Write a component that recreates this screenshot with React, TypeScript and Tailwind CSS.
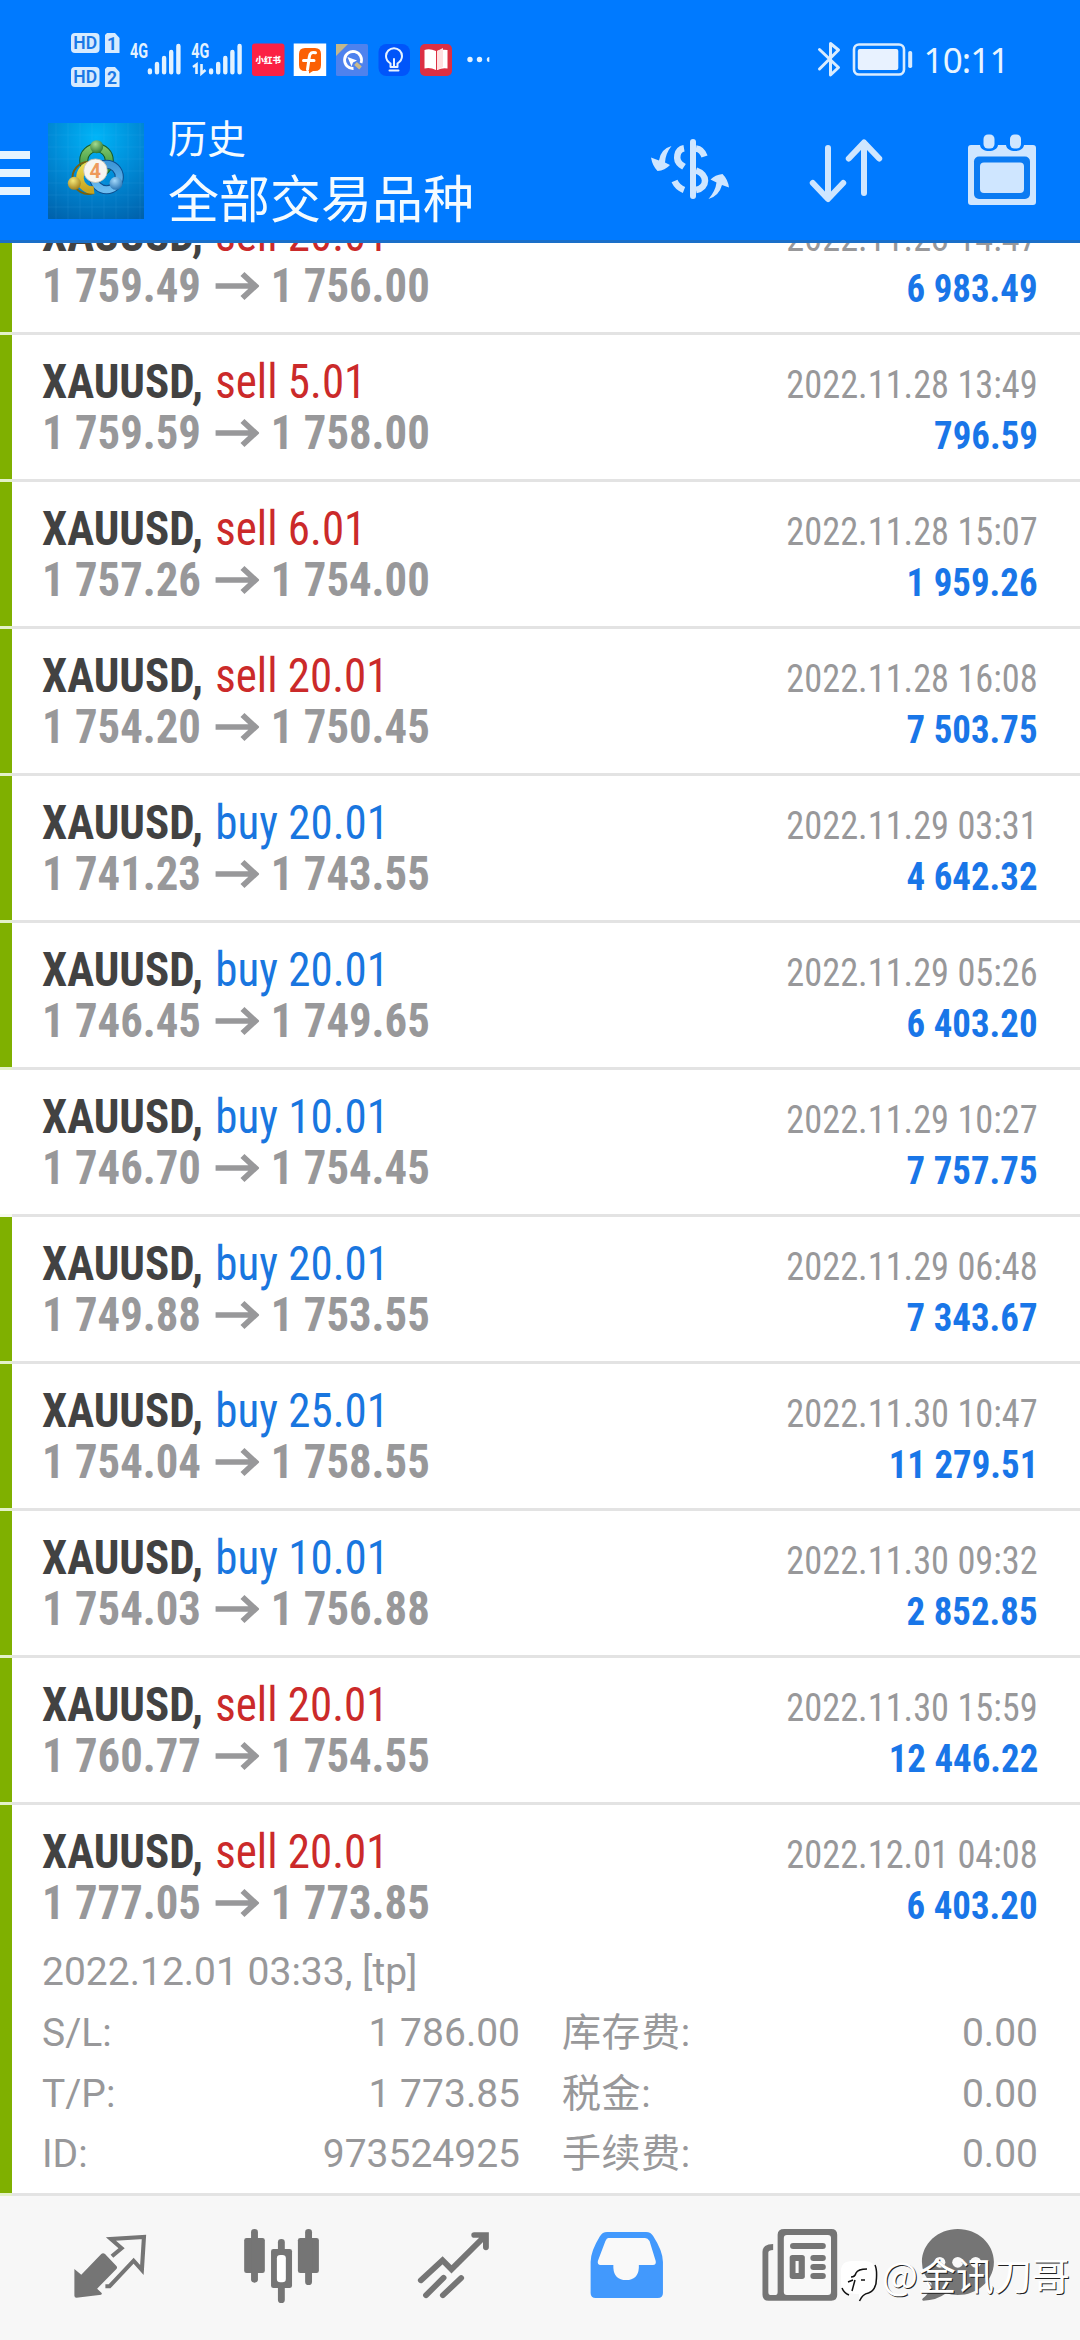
import React from 'react';

interface Deal {
  side: 'buy' | 'sell';
  volume: string;
  open: string;
  close: string;
  time: string;
  profit: string;
  marked: boolean;
}

const deals: Deal[] = [
  { side: 'sell', volume: '20.01', open: '1 759.49', close: '1 756.00', time: '2022.11.28 14:47', profit: '6 983.49', marked: true },
  { side: 'sell', volume: '5.01', open: '1 759.59', close: '1 758.00', time: '2022.11.28 13:49', profit: '796.59', marked: true },
  { side: 'sell', volume: '6.01', open: '1 757.26', close: '1 754.00', time: '2022.11.28 15:07', profit: '1 959.26', marked: true },
  { side: 'sell', volume: '20.01', open: '1 754.20', close: '1 750.45', time: '2022.11.28 16:08', profit: '7 503.75', marked: true },
  { side: 'buy', volume: '20.01', open: '1 741.23', close: '1 743.55', time: '2022.11.29 03:31', profit: '4 642.32', marked: true },
  { side: 'buy', volume: '20.01', open: '1 746.45', close: '1 749.65', time: '2022.11.29 05:26', profit: '6 403.20', marked: true },
  { side: 'buy', volume: '10.01', open: '1 746.70', close: '1 754.45', time: '2022.11.29 10:27', profit: '7 757.75', marked: false },
  { side: 'buy', volume: '20.01', open: '1 749.88', close: '1 753.55', time: '2022.11.29 06:48', profit: '7 343.67', marked: true },
  { side: 'buy', volume: '25.01', open: '1 754.04', close: '1 758.55', time: '2022.11.30 10:47', profit: '11 279.51', marked: true },
  { side: 'buy', volume: '10.01', open: '1 754.03', close: '1 756.88', time: '2022.11.30 09:32', profit: '2 852.85', marked: true },
  { side: 'sell', volume: '20.01', open: '1 760.77', close: '1 754.55', time: '2022.11.30 15:59', profit: '12 446.22', marked: true },
  { side: 'sell', volume: '20.01', open: '1 777.05', close: '1 773.85', time: '2022.12.01 04:08', profit: '6 403.20', marked: true },
];

const details = [
  ['S/L:', '1 786.00', '库存费:', '0.00'],
  ['T/P:', '1 773.85', '税金:', '0.00'],
  ['ID:', '973524925', '手续费:', '0.00'],
];

const StatusBar: React.FC = () => (
  <svg className="block w-full h-[100px]" viewBox="0 0 1080 100">
    {/* SIM badges */}
    {[33, 67].map((y, i) => (
      <g key={y}>
        <rect x="71" y={y} width="28.5" height="20" rx="4" fill="#d6ebff" />
        <text x="85.2" y={y + 16} textAnchor="middle" fontSize="17.5" fontWeight="600" fill="#1b78e6" fontFamily="Roboto, sans-serif">HD</text>
        <path d={`M107 ${y}h8l4.5 5v15h-14.5v-18z`} fill="#d6ebff" />
        <text x="112" y={y + 16.5} textAnchor="middle" fontSize="17.5" fontWeight="700" fill="#1b78e6" fontFamily="Roboto, sans-serif">{i + 1}</text>
      </g>
    ))}

    {/* Signal strength */}
    {[0, 61.2].map((dx) => (
      <g key={dx} transform={`translate(${dx} 0)`}>
        <text x="130" y="58" fontSize="20" fontWeight="700" fill="#e3f2ff" textLength="18" lengthAdjust="spacingAndGlyphs" fontFamily="Roboto, sans-serif">4G</text>
        <path d="M149.9 70.5v1.8M157 64v8.3M164.1 58v14.3M171.2 52v20.3M178.4 46v26.3" stroke="#e3f2ff" strokeWidth="4.4" strokeLinecap="round" />
      </g>
    ))}
    <path d="M193 67l3.5-2.500v9.500M201.500 64v9.500l4-3.500" stroke="#e3f2ff" strokeWidth="2.6" fill="none" />

    {/* Notifications */}
    <rect x="252" y="43.5" width="32.5" height="32.5" rx="3" fill="#fb2144" />
    <text x="268.2" y="63" textAnchor="middle" fontSize="8.500" fontWeight="900" fill="#fff" fontFamily="'Noto Sans CJK SC', sans-serif">小红书</text>
    <rect x="293.7" y="43.5" width="32.5" height="32.5" fill="#fff" />
    <path d="M305 48h10q6 0 6 6v11q0 6-6 6h-2l-4 2.5v-2.5h-4q-6 0-6-6v-11q0-6 6-6z" fill="#fb6005" />
    <path d="M315.5 52.8q-5.500-1.500-6.200 4.200l-1.800 12.500M303.500 60.500h10.500" stroke="#fff" strokeWidth="3" fill="none" strokeLinecap="round" />
    <rect x="336" y="44" width="32" height="32" rx="1.500" fill="#4e82ee" />
    <path d="M336 44h12l-12 12z" fill="#c3b78b" />
    <path d="M353.500 68.500a8.500 8.500 0 1 1 7.500-5.500" stroke="#fff" strokeWidth="2.800" fill="none" />
    <path d="M347.500 57l9.500 3.500-4 2-1.500 4z" fill="#fff" />
    <path d="M355.500 63.500l5 4.500" stroke="#c9b98a" strokeWidth="4" />
    <rect x="378.500" y="44" width="31.500" height="32" rx="8" fill="#0055fa" />
    <path d="M390.500 67v-3.500q-4.500-3-4.500-7.500a8 7.800 0 0 1 16 0q0 4.500-4.500 7.500v3.500zM389.500 70.500h9M394 67v-8" stroke="#e8f3ff" strokeWidth="2" fill="none" strokeLinejoin="round" strokeLinecap="round" />
    <rect x="420" y="44" width="32" height="32" rx="5" fill="#dc2f43" />
    <path d="M424.500 50q5-2 11.500 1v19q-6-3-11.500-1.500zM437 51q5-2 10.500-1v18.500q-5-1-10.500 1.500z" fill="#fff" />
    <path d="M437 51l6-3v19l-6 3z" fill="#ffdfe0" />
    <circle cx="470" cy="59.500" r="2.700" fill="#e3f2ff" />
    <circle cx="479.500" cy="59.500" r="2.700" fill="#e3f2ff" />
    <path d="M489.300 57v5a2.500 2.500 0 0 1 0-5z" fill="#e3f2ff" />

    {/* Bluetooth, battery, clock */}
    <path d="M819.500 49.500l19 18-8 7.500v-31.500l8 6.500-19 19" stroke="#d9ecff" strokeWidth="3" fill="none" strokeLinejoin="round" strokeLinecap="round" />
    <rect x="854" y="44.500" width="50" height="30" rx="5" fill="none" stroke="#d9ecff" strokeWidth="2.600" />
    <rect x="857.800" y="49" width="40.500" height="21" rx="2" fill="#e8f2ff" />
    <rect x="908.200" y="51" width="4" height="17" rx="1.800" fill="#d9ecff" />
    <text x="923.500" y="73.300" fontSize="35" fill="#e8f5ff" textLength="86" lengthAdjust="spacing" fontFamily="'Noto Sans', sans-serif">10:11</text>
  </svg>
);

const AppLogo: React.FC = () => (
  <svg className="w-24 h-24" viewBox="0 0 96 96">
    <defs>
      <radialGradient id="tile" cx="0.5" cy="0.15" r="0.95">
        <stop offset="0" stopColor="#00b5f8" />
        <stop offset="0.5" stopColor="#008ad6" />
        <stop offset="1" stopColor="#0062ac" />
      </radialGradient>
      <linearGradient id="green" x1="0" y1="0" x2="0" y2="1">
        <stop offset="0" stopColor="#7cc468" />
        <stop offset="1" stopColor="#2c8a38" />
      </linearGradient>
      <linearGradient id="yellow" x1="0" y1="0" x2="0" y2="1">
        <stop offset="0" stopColor="#ecdc50" />
        <stop offset="1" stopColor="#c8a520" />
      </linearGradient>
      <linearGradient id="blue" x1="0" y1="0" x2="0" y2="1">
        <stop offset="0" stopColor="#3f97d8" />
        <stop offset="1" stopColor="#6cbcf0" />
      </linearGradient>
      <radialGradient id="greenBall" cx="0.4" cy="0.3" r="0.8">
        <stop offset="0" stopColor="#a5dc90" />
        <stop offset="1" stopColor="#1e6b2a" />
      </radialGradient>
      <radialGradient id="yellowBall" cx="0.4" cy="0.3" r="0.8">
        <stop offset="0" stopColor="#f5e878" />
        <stop offset="1" stopColor="#967210" />
      </radialGradient>
      <radialGradient id="blueBall" cx="0.4" cy="0.3" r="0.8">
        <stop offset="0" stopColor="#a3d8fa" />
        <stop offset="1" stopColor="#1a69ac" />
      </radialGradient>
    </defs>
    <rect width="96" height="96" fill="url(#tile)" />
    <path d="M0 12h96M0 24h96M0 36h96M0 48h96M0 60h96M0 72h96M0 84h96M8 0v96M20 0v96M32 0v96M44 0v96M56 0v96M68 0v96M80 0v96M92 0v96" stroke="#5fd0ff" strokeOpacity="0.1" strokeWidth="1" />
    <circle cx="48.500" cy="37.500" r="12.800" fill="none" stroke="#175c28" strokeWidth="9" />
    <circle cx="48.500" cy="37.500" r="12.800" fill="none" stroke="url(#green)" strokeWidth="7" />
    <circle cx="58.500" cy="54" r="12.800" fill="none" stroke="#0d4f8f" strokeWidth="9" />
    <circle cx="58.500" cy="54" r="12.800" fill="none" stroke="url(#blue)" strokeWidth="7" />
    <path d="M41 39a16 16 0 1 0 5 31" fill="none" stroke="#75610f" strokeWidth="2" />
    <path d="M43 42a12.500 12.500 0 1 0 3 25" fill="none" stroke="url(#yellow)" strokeWidth="7.500" />
    <circle cx="48.700" cy="23.700" r="6.500" fill="url(#greenBall)" />
    <circle cx="26.300" cy="60.300" r="6.500" fill="url(#yellowBall)" />
    <circle cx="68" cy="60.300" r="6.500" fill="url(#blueBall)" />
    <circle cx="47.500" cy="47.700" r="11.800" fill="#f7f5f0" stroke="#c4bfae" strokeWidth="0.800" />
    <text x="47.300" y="55" textAnchor="middle" fontSize="20" fontWeight="700" fill="#ee9a5c" fontFamily="Roboto, sans-serif">4</text>
  </svg>
);

const Header: React.FC = () => (
  <header className="h-[243px] bg-[#007aff] border-b-3 border-[#1a6fc9]">
    <StatusBar />
    <div className="flex h-[140px]">
      <div className="flex flex-col gap-[10px] w-[30px] mt-[51px]">
        <div className="h-2 bg-[#e6f4ff]" />
        <div className="h-2 bg-[#e6f4ff]" />
        <div className="h-2 bg-[#e6f4ff]" />
      </div>
      <div className="ml-[18px] mt-[23px]">
        <AppLogo />
      </div>
      <div className="ml-6 mt-[7px] text-[#f4fbff] font-['Noto_Sans_CJK_SC',sans-serif]">
        <p className="text-[39px] leading-[58px]">历史</p>
        <h1 className="text-[51px] leading-[62px]">全部交易品种</h1>
      </div>

      <div className="flex ml-auto mr-[42px] mt-[32px] gap-[76px]">
        <svg className="w-20 h-[76px]" viewBox="650 132 80 76" fill="none" stroke="#cfe6ff" strokeWidth="6" strokeLinecap="round">
          <path d="M693 142v54" />
          <path d="M696 148.500q6 .8 8.500 8M684 148.300c-7 1.200-9.500 11.500-3 16.500l3 2M674.500 181q3 6.500 9.500 9M696 170.500c12 4 12 17 0 19.500" strokeLinecap="butt" strokeWidth="6.500" />
          <path d="M671.500 146q-11 3-12.500 14.500l-8-3q1.500 8.500 6.500 13.500 7.500-.5 12.500-6l-5-2.500q.5-9 6.500-16.500zM708.500 199q10.500-3 13.500-14l7 2.500q-1-8-6.500-13.500-7.500.8-12 5.500l6 3q-1 8.500-8 16.500z" fill="#cfe6ff" stroke="none" />
        </svg>
        <svg className="w-20 h-[76px]" viewBox="806 132 80 76" fill="none" stroke="#cfe6ff" strokeWidth="6" strokeLinecap="round" strokeLinejoin="round">
          <path d="M828 148v50M812.800 183l15.200 16 15.200-16M864 193v-50M848.800 158.500l15.200-16 15.200 16" />
        </svg>
        <svg className="w-[76px] h-[76px]" viewBox="962 132 76 76">
          <path d="M971 145h9c1 8 17 8 18 0h8c1 8 17 8 18 0h9q3 0 3 3v54q0 3-3 3h-62q-3 0-3-3v-54q0-3 3-3z" fill="#cfe6ff" />
          <rect x="974" y="156.500" width="56" height="42.500" rx="5" fill="#0b7bf2" />
          <rect x="980" y="162.500" width="44" height="30.500" rx="4" fill="#cfe6ff" />
          <rect x="983.500" y="134.500" width="11" height="14" rx="4.500" fill="#cfe6ff" />
          <rect x="1010" y="134.500" width="11" height="14" rx="4.500" fill="#cfe6ff" />
        </svg>
      </div>
    </div>
  </header>
);

const PriceArrow: React.FC = () => (
  <svg className="w-[47px] h-7 ml-[15px] mr-[13px]" viewBox="0 0 42 28" preserveAspectRatio="none">
    <path d="M0 14h38M26 2l12.500 12-12.500 12" stroke="#98989a" strokeWidth="5.500" fill="none" />
  </svg>
);

const DealRow: React.FC<{ deal: Deal; children?: React.ReactNode }> = ({ deal, children }) => (
  <div className="flex">
    <div className={deal.marked ? 'w-3 bg-[#7fb000] border-b-3 border-[#e3f1c8]' : 'w-3 bg-white border-b-3 border-[#f6faee]'} />
    <div className="flex-1 pl-[30px] pr-[42px] border-b-3 border-[#e3e3e3]">
      <div className="h-36 pt-[21px] font-['Roboto_Condensed',Roboto,sans-serif] font-stretch-condensed leading-[51px]">
        <div className="flex justify-between items-baseline h-[51px]">
          <div className="text-[48px] origin-left scale-x-[0.937]">
            <span className="font-bold text-[#424242]">XAUUSD, </span>
            <span className={deal.side === 'buy' ? 'ml-0.5 text-[#1976df]' : 'ml-0.5 text-[#cb2a2a]'}>
              {deal.side} {deal.volume}
            </span>
          </div>
          <span className="text-[39px] text-[#98989a] origin-right scale-x-[0.932]">{deal.time}</span>
        </div>
        <div className="flex justify-between items-baseline h-[51px] font-bold">
          <div className="flex items-center text-[48px] text-[#98989a] origin-left scale-x-[0.932]">
            <span>{deal.open}</span>
            <PriceArrow />
            <span>{deal.close}</span>
          </div>
          <span className="text-[39px] text-[#1976e8] origin-right scale-x-[0.945]">{deal.profit}</span>
        </div>
      </div>
      {children}
    </div>
  </div>
);

const DealDetails: React.FC = () => (
  <div className="h-[244px] text-[39px] text-[#98989a] leading-[46px] font-[Roboto,'Noto_Sans_CJK_SC',sans-serif]">
    <p className="h-[61px]">2022.12.01 03:33, [tp]</p>
    {details.map(([label, value, feeLabel, fee]) => (
      <div key={label} className="flex h-[60.5px]">
        <span className="w-20">{label}</span>
        <span className="flex-1 text-right">{value}</span>
        <span className="w-[200px] ml-[42px] tracking-[0.6px]">{feeLabel}</span>
        <span className="w-[276px] text-right">{fee}</span>
      </div>
    ))}
  </div>
);

const TabBar: React.FC = () => (
  <nav className="grid grid-cols-6 h-36 bg-[#f7f7f7] text-[#757575]">
    {/* Quotes */}
    <svg className="w-[180px] h-36" viewBox="0 48 522.67 432" preserveAspectRatio="none">
      <path d="M216 267l20 17 58-62q5-5 11 0l33 36q4 5 0 9l-56 59 14 14-2 4-72 9q-6 0-6-6z" fill="currentColor" />
      <path d="M325 229l28-24-31-28 96-6-6 99-24-28-70 77h-12" stroke="currentColor" strokeWidth="12" fill="none" />
    </svg>
    {/* Charts */}
    <svg className="w-[180px] h-36" viewBox="522.67 48 522.67 432" preserveAspectRatio="none">
      <g fill="currentColor">
        <rect x="709" y="174" width="60" height="105" rx="7" />
        <rect x="729" y="147" width="20" height="161" rx="10" />
        <rect x="865" y="174" width="61" height="105" rx="7" />
        <rect x="886" y="147" width="20" height="168" rx="10" />
        <rect x="787" y="207" width="61" height="117" rx="7" />
        <rect x="807" y="177" width="20" height="192" rx="10" />
      </g>
      <rect x="804" y="225" width="26" height="82" rx="10" fill="#fff" />
    </svg>
    {/* Trade */}
    <svg className="w-[180px] h-36" viewBox="1045.33 48 522.67 432" preserveAspectRatio="none">
      <path d="M1222 301l63-60 26 27 98-101M1377 165h34v37" stroke="currentColor" strokeWidth="17" fill="none" strokeLinecap="round" />
      <path d="M1237 346l51-53M1286 346l53-52" stroke="currentColor" strokeWidth="17" fill="none" strokeLinecap="round" />
    </svg>
    {/* History */}
    <svg className="w-[180px] h-36" viewBox="0 48 522.67 432" preserveAspectRatio="none">
      <path d="M195 156h113q14 0 21 13 28 45 28 77v93q0 15-15 15h-180q-15 0-15-15v-93q0-32 27-77 7-13 21-13z" fill="#4299fd" />
      <path d="M198 174h107q8 0 13 9l18 60q2 12-8 12h-41v8q-2 37-37 37t-37-37v-8h-37q-10 0-8-12l22-60q4-9 8-9z" fill="#f9f9f9" />
    </svg>
    {/* News */}
    <svg className="w-[180px] h-36" viewBox="522.67 48 522.67 432" preserveAspectRatio="none">
      <path d="M709 147h137q17 0 17 17v181q0 17-17 17h-182q-18 0-18-18v-129q0-23 31-23v18q-14 0-14 8v118q0 9 6 9h15q6 0 6-9v-172q0-17 19-17z" fill="currentColor" />
      <rect x="708" y="165" width="137" height="180" rx="9" fill="#f9f9f9" />
      <path d="M735 198h86M794 234h27M794 261h27M794 288h27" stroke="currentColor" strokeWidth="18" strokeLinecap="round" />
      <rect x="725" y="225" width="44" height="72" rx="8" fill="currentColor" />
      <rect x="742" y="243" width="9" height="36" fill="#f9f9f9" />
    </svg>
    {/* Chat */}
    <svg className="w-[180px] h-36" viewBox="1045.33 48 522.67 432" preserveAspectRatio="none">
      <path d="M1213 147c58 0 105 44 105 99s-47 99-105 99q-19 0-34-5-28 22-66 22-6-2-1-7 22-18 25-44-28-28-28-65c0-55 47-99 104-99z" fill="currentColor" />
      <circle cx="1161" cy="247" r="16" fill="#f9f9f9" />
      <circle cx="1213" cy="247" r="16" fill="#f9f9f9" />
      <circle cx="1265" cy="247" r="16" fill="#f9f9f9" />
    </svg>
  </nav>
);

const Watermark: React.FC = () => (
  <div className="absolute left-[841px] top-[2253px] flex">
    <svg className="w-[38px] h-12 mt-[7px]" viewBox="0 0 38 48">
      <path d="M11 1h13q10 0 10 10v12q0 9-8 11l-8 6v-6q-18 0-18-11v-12q0-10 11-10z" fill="#fff" />
      <path d="M34 5q2 4 1.500 13 0 12-8 15-6 1-9 8M1 28q2 5 7 7M11 31l3-11M7 22l5-2M20 20h4M10 17q4 0 5-4 2-4 11-4" stroke="#111" strokeWidth="1.500" fill="none" />
    </svg>
    <span className="ml-[3px] text-[38px] leading-[42px] text-white font-['Noto_Sans_CJK_SC',sans-serif] [text-shadow:1px_1px_0_#222]">@金讯刀哥</span>
  </div>
);

const App: React.FC = () => {
  const latest = deals.length - 1;

  return (
    <div className="relative w-[1080px] h-[2340px] bg-white overflow-hidden">
      <Header />
      {/* The list is scrolled, so its first row is cut by the header */}
      <main className="flex flex-col justify-end h-[1953px] overflow-hidden">
        {deals.map((deal, index) => (
          <DealRow key={deal.time} deal={deal}>
            {index === latest && <DealDetails />}
          </DealRow>
        ))}
      </main>
      <TabBar />
      <Watermark />
    </div>
  );
};

export default App;
